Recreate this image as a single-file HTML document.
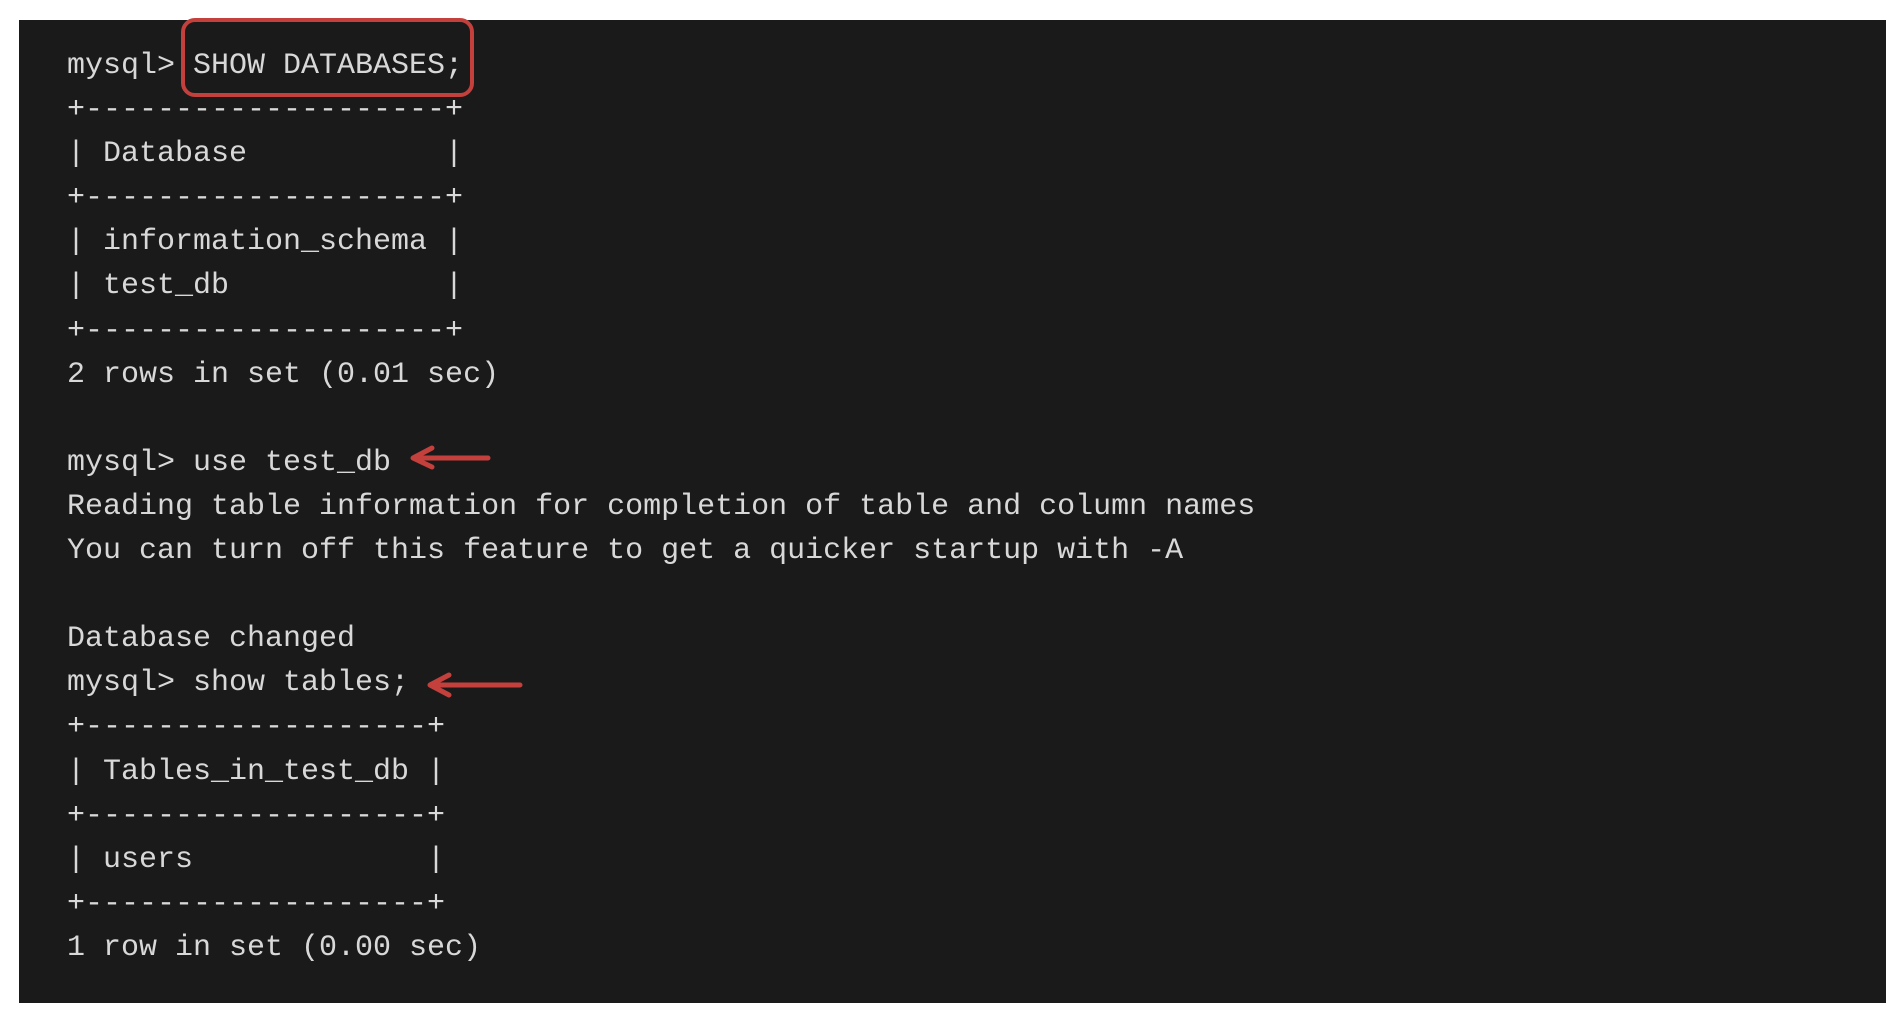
<!DOCTYPE html>
<html><head><style>
body{margin:0;width:1904px;height:1022px;background:#fff;position:relative;overflow:hidden}
.term{position:absolute;left:19px;top:20px;width:1867px;height:983px;background:#1a1a1a}
pre{position:absolute;left:67px;top:44px;margin:0;font-family:"Liberation Mono",monospace;font-size:30px;line-height:44.1px;color:#d8d8d8}
svg{position:absolute;left:0;top:0}
</style></head><body>
<div class="term"></div>
<pre>mysql&gt; SHOW DATABASES;
+--------------------+
| Database           |
+--------------------+
| information_schema |
| test_db            |
+--------------------+
2 rows in set (0.01 sec)

mysql&gt; use test_db
Reading table information for completion of table and column names
You can turn off this feature to get a quicker startup with -A

Database changed
mysql&gt; show tables;
+-------------------+
| Tables_in_test_db |
+-------------------+
| users             |
+-------------------+
1 row in set (0.00 sec)</pre>
<svg width="1904" height="1022">
<rect x="183" y="20" width="289" height="75" rx="12" fill="none" stroke="#c4403c" stroke-width="4"/>
<g fill="none" stroke="#c4403c" stroke-width="5" stroke-linecap="round" stroke-linejoin="round">
<path d="M488 458 L414 458 M432 448 L413 458 L432 467"/>
<path d="M520 685 L431 685 M449 675 L430 685 L449 695"/>
</g>
</svg>
</body></html>
